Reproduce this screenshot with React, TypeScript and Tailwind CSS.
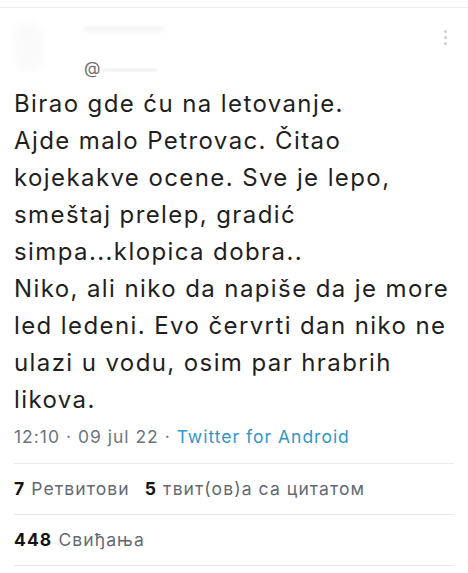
export default function App() {
  const lines = [
    "Birao gde ću na letovanje.",
    "Ajde malo Petrovac. Čitao",
    "kojekakve ocene. Sve je lepo,",
    "smeštaj prelep, gradić",
    "simpa...klopica dobra..",
    "Niko, ali niko da napiše da je more",
    "led ledeni. Evo červrti dan niko ne",
    "ulazi u vodu, osim par hrabrih",
    "likova.",
  ];

  return (
    <div className="min-h-screen w-full bg-white font-['Inter',sans-serif]">
      <div className="pt-[7px]">
        <div className="h-px w-full bg-[#ececec]" />
      </div>

      {/* header (blurred in source) */}
      <div className="relative flex h-[77px] items-start px-[14px]">
        <div className="mt-[14px] h-[50px] w-[30px] rounded-full bg-[#fafafa] blur-[3px]" />
        <div className="ml-[40px] flex flex-col">
          <div className="mt-[18px] h-[6px] w-[80px] rounded bg-[#f5f5f5] blur-[2px]" />
          <div className="mt-[27px] flex items-center gap-[2px] text-[17px] leading-[18px] text-[#6e6e6e]">
            <span>@</span>
            <span className="mt-[4px] h-[2px] w-[55px] rounded bg-[#e8e8e8] blur-[1px]" />
          </div>
        </div>
        <div className="absolute right-[21px] top-[22px] flex flex-col gap-[3px]">
          <span className="h-[3px] w-[3px] rounded-full bg-[#cfcfcf]" />
          <span className="h-[3px] w-[3px] rounded-full bg-[#cfcfcf]" />
          <span className="h-[3px] w-[3px] rounded-full bg-[#cfcfcf]" />
        </div>
      </div>

      <div className="px-[14px]">
        <div className="text-[24px] leading-[37px] tracking-[1.4px] text-[#1f1f1f]">
          {lines.map((l) => (
            <div key={l} className="whitespace-nowrap">
              {l}
            </div>
          ))}
        </div>

        <div className="mt-[7px] pb-[14px] text-[17.5px] leading-[24px] tracking-[1px] text-[#6b7680]">
          12:10 · 09 jul 22 · <span className="text-[#3196c6]">Twitter for Android</span>
        </div>

        <div className="h-px bg-[#ebebeb]" />
        <div className="py-[13px] text-[17.5px] leading-[24px] tracking-[1.1px] text-[#5f6a73]">
          <span className="font-bold text-[#141414]">7</span> Ретвитови{" "}
          <span className="ml-[9px] font-bold text-[#141414]">5</span> твит(ов)а са цитатом
        </div>
        <div className="h-px bg-[#ebebeb]" />
        <div className="py-[13px] text-[17.5px] leading-[24px] tracking-[1.1px] text-[#5f6a73]">
          <span className="font-bold text-[#141414]">448</span> Свиђања
        </div>
        <div className="h-px bg-[#ebebeb]" />
      </div>
    </div>
  );
}
